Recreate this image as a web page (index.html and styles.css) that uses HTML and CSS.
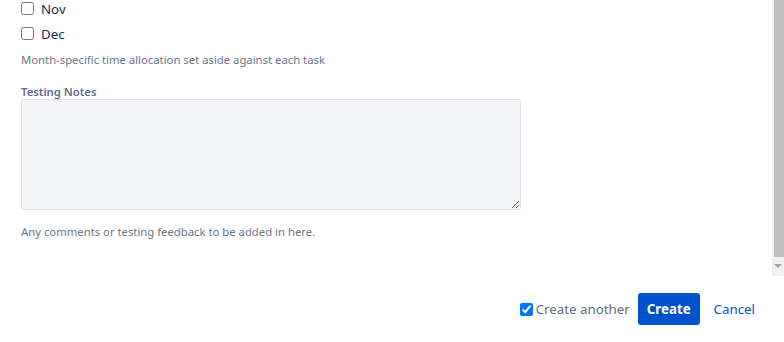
FILE: index.html
```html
<!DOCTYPE html>
<html lang="en">
<head>
    <meta charset="UTF-8">
    <meta name="viewport" content="width=device-width, initial-scale=1.0">
    <title>Create issue</title>
    <link rel="stylesheet" href="styles.css">
</head>
<body>

    <div class="dialog">
        <div class="dialog-body">
            <div class="content">
                <div class="field">
                    <label class="check"><input type="checkbox" name="month" value="nov"> Nov</label>
                    <label class="check"><input type="checkbox" name="month" value="dec"> Dec</label>
                    <div class="description">Month-specific time allocation set aside against each task</div>
                </div>

                <div class="field">
                    <label class="field-label" for="testingNotes">Testing Notes</label>
                    <textarea id="testingNotes" class="textarea"></textarea>
                    <div class="description">Any comments or testing feedback to be added in here.</div>
                </div>
            </div>

            <div class="scrollbar">
                <div class="thumb"></div>
                <div class="arrow"></div>
            </div>
        </div>

        <div class="dialog-footer">
            <label class="create-another"><input type="checkbox" checked> Create another</label>
            <button type="button" class="btn-primary">Create</button>
            <button type="button" class="btn-link">Cancel</button>
        </div>
    </div>

</body>
</html>
```

FILE: styles.css
```css
body {
    margin: 0;
    font-family: 'Segoe UI', 'Noto Sans', sans-serif;
    font-size: 13.3px;
    color: #172b4d;
    background: #fff;
}
.dialog {
    width: 784px;
    height: 342px;
    display: flex;
    flex-direction: column;
}
.dialog-body {
    display: flex;
    height: 276px;
}
.content {
    flex: 1;
    padding: 0 21px;
}
.check {
    display: flex;
    align-items: center;
    height: 25px;
    margin-top: -4px;
    color: #172b4d;
}
.check + .check {
    margin-top: 0;
}
.check input {
    width: 13px;
    height: 13px;
    margin: 0 7px 0 0;
}
.description {
    font-size: 11.3px;
    color: #6b778c;
    margin-top: 6px;
    line-height: 16px;
}
.field + .field {
    margin-top: 16px;
}
.field-label {
    display: block;
    font-size: 11.3px;
    font-weight: 600;
    color: #5e6c84;
    line-height: 16px;
    margin-bottom: -1px;
}
.textarea {
    display: block;
    box-sizing: border-box;
    width: 500px;
    height: 111px;
    margin: 0;
    background: #f4f5f7;
    border: 1px solid #dfe1e6;
    border-radius: 3px;
    font-family: inherit;
    resize: vertical;
}
.textarea + .description {
    margin-top: 14px;
}
.scrollbar {
    width: 12px;
    display: flex;
    flex-direction: column;
    background: #f1f1f1;
}
.thumb {
    height: 257px;
    margin-left: 2px;
    background: #c1c1c1;
}
.arrow {
    width: 0;
    height: 0;
    margin: 7px auto 0;
    border-left: 4px solid transparent;
    border-right: 4px solid transparent;
    border-top: 4px solid #a3a3a3;
}
.dialog-footer {
    display: flex;
    justify-content: flex-end;
    align-items: center;
    padding: 17px 29px 0 0;
}
.create-another {
    display: flex;
    align-items: center;
    color: #5e6c84;
    margin-right: 8px;
}
.create-another input {
    width: 13px;
    height: 13px;
    margin: 0 3px 0 0;
}
.btn-primary {
    height: 32px;
    padding: 0 9px;
    background: #0052cc;
    color: #fff;
    border: none;
    border-radius: 3px;
    font-family: inherit;
    font-size: 13.3px;
    font-weight: 700;
    cursor: pointer;
}
.btn-link {
    height: 32px;
    padding: 0 0 0 14px;
    background: none;
    border: none;
    color: #0052cc;
    font-family: inherit;
    font-size: 13.3px;
    cursor: pointer;
}
```
